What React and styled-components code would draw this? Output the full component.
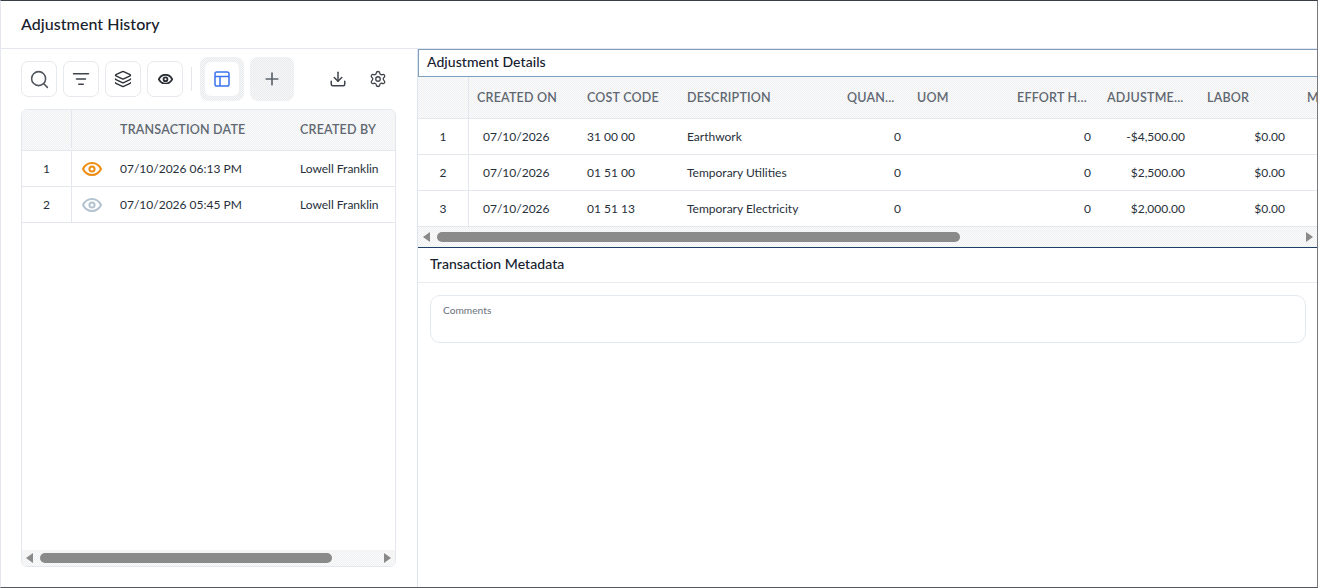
import styled, { createGlobalStyle, css } from 'styled-components'
import { Search, ListFilter, Layers, Plus, Download, Settings } from 'lucide-react'

const GlobalStyle = createGlobalStyle`
  html, body {
    margin: 0;
    height: 100%;
    background: #fff;
    font-family: Lato, "Liberation Sans", sans-serif;
    color: #1f2933;
  }
  * { box-sizing: border-box; }
`

const dither = css`
  background: repeating-conic-gradient(#eff0f2 0 25%, #fbfbfb 0 50%) 0 0 / 2px 2px;
`

const toolDither = css`
  background: repeating-conic-gradient(#e8eaec 0 25%, #f7f8f9 0 50%) 0 0 / 2px 2px;
`

const historyColumns = '50px 40px 180px 1fr'
const detailColumns = '51px 110px 100px 160px 70px 100px 90px 100px 100px 100px'

const detailRows = [
  { id: 1, date: '07/10/2026', code: '31 00 00', description: 'Earthwork', amount: '-$4,500.00' },
  { id: 2, date: '07/10/2026', code: '01 51 00', description: 'Temporary Utilities', amount: '$2,500.00' },
  { id: 3, date: '07/10/2026', code: '01 51 13', description: 'Temporary Electricity', amount: '$2,000.00' },
]

const historyRows = [
  { id: 1, date: '07/10/2026 06:13 PM', user: 'Lowell Franklin', color: '#ee8c12' },
  { id: 2, date: '07/10/2026 05:45 PM', user: 'Lowell Franklin', color: '#b3c3d1' },
]

const Frame = styled.div`
  width: 1318px;
  height: 588px;
  display: flex;
  flex-direction: column;
  overflow: hidden;
  border-top: 1px solid #3a3f47;
  border-right: 1px solid #77797d;
  border-bottom: 1px solid #55585c;
  border-left: 1px solid #e4e8ee;
`

const PageHeader = styled.header`
  height: 48px;
  flex: none;
  display: flex;
  align-items: center;
  padding: 0 20px 3px;
  border-bottom: 1px solid #e4e8ee;
  font-size: 16px;
  font-weight: 500;
  letter-spacing: 0.05px;
  color: #17202b;
`

const Body = styled.div`
  flex: 1;
  min-height: 0;
  display: flex;
`

const LeftPane = styled.section`
  width: 417px;
  flex: none;
  display: flex;
  flex-direction: column;
  padding: 8px 21px 20px 20px;
  border-right: 1px solid #dde6ee;
`

const RightPane = styled.section`
  flex: 1;
  min-width: 0;
  display: flex;
  flex-direction: column;
`

const Toolbar = styled.div`
  height: 44px;
  flex: none;
  display: flex;
  align-items: center;
  gap: 6px;
  margin-bottom: 8px;
`

const ToolButton = styled.button`
  width: 36px;
  height: 36px;
  padding: 0;
  display: flex;
  align-items: center;
  justify-content: center;
  background: #fff;
  border: 1px solid #e6e9ed;
  border-radius: 7px;
  color: ${(p) => p.$color || '#2b3036'};
`

const ToolDivider = styled.span`
  width: 1px;
  height: 24px;
  margin: 0 2px;
  background: #e4e7eb;
`

const ActiveWrap = styled.div`
  ${toolDither}
  width: 44px;
  height: 44px;
  display: flex;
  align-items: center;
  justify-content: center;
  border-radius: 8px;
`

const ActiveButton = styled(ToolButton)`
  border-color: #eef0f3;
`

const AddButton = styled.button`
  ${toolDither}
  width: 44px;
  height: 44px;
  padding: 0;
  display: flex;
  align-items: center;
  justify-content: center;
  border: none;
  border-radius: 8px;
  color: #5d646c;
`

const PlainIcon = styled.button`
  width: 24px;
  height: 24px;
  padding: 0;
  display: flex;
  align-items: center;
  justify-content: center;
  background: none;
  border: none;
  color: #3f454c;
  margin-left: ${(p) => p.$offset || 0}px;
`

const HistoryCard = styled.div`
  flex: 1;
  min-height: 0;
  display: flex;
  flex-direction: column;
  overflow: hidden;
  border: 1px solid #e4e8ee;
  border-radius: 6px;
`

const Spacer = styled.div`
  flex: 1;
`

const HeadRow = styled.div`
  ${dither}
  height: ${(p) => p.$height}px;
  flex: none;
  display: grid;
  grid-template-columns: ${(p) => p.$columns};
  padding-bottom: ${(p) => p.$lift || 0}px;
  border-bottom: 1px solid #e4e8ee;
`

const Row = styled.div`
  height: 36px;
  flex: none;
  display: grid;
  grid-template-columns: ${(p) => p.$columns};
  border-bottom: 1px solid #e4e8ee;
`

const HeadCell = styled.div`
  display: flex;
  align-items: center;
  padding: 0 8px;
  min-width: 0;
  overflow: hidden;
  white-space: nowrap;
  font-size: 12.5px;
  font-weight: 600;
  letter-spacing: 0.2px;
  color: #5f6872;
  border-right: ${(p) => (p.$divider ? '1px solid #e4e8ee' : 'none')};
`

const Cell = styled.div`
  display: flex;
  align-items: center;
  justify-content: ${(p) => (p.$align === 'right' ? 'flex-end' : p.$align === 'center' ? 'center' : 'flex-start')};
  padding: ${(p) => (p.$wide ? '0 14px' : '0 8px')};
  min-width: 0;
  overflow: hidden;
  white-space: nowrap;
  font-size: 12px;
  color: #27303a;
  border-right: ${(p) => (p.$divider ? '1px solid #e4e8ee' : 'none')};
`

const ScrollBar = styled.div`
  ${dither}
  height: ${(p) => p.$height}px;
  flex: none;
  display: flex;
  align-items: center;
  padding: 0 4px 0 ${(p) => p.$inset}px;
  gap: 7px;
`

const ScrollArrow = styled.span`
  width: 0;
  height: 0;
  flex: none;
  border-top: 5px solid transparent;
  border-bottom: 5px solid transparent;
  ${(p) => (p.$dir === 'left' ? 'border-right: 7px solid #8a8a8a;' : 'border-left: 7px solid #8a8a8a;')}
`

const ScrollTrack = styled.div`
  flex: 1;
  height: 10px;
`

const ScrollThumb = styled.div`
  height: 100%;
  background: #8a8a8a;
  border-radius: 5px;
`

const DetailTitle = styled.h2`
  height: 28px;
  flex: none;
  margin: 0;
  display: flex;
  align-items: center;
  padding: 0 8px 3px;
  border: 1px solid #7f9fbd;
  border-right: none;
  font-size: 14px;
  font-weight: 500;
  letter-spacing: 0.05px;
  color: #14202e;
`

const DetailTable = styled.div`
  flex: none;
  display: flex;
  flex-direction: column;
  overflow: hidden;
`

const MetaPanel = styled.div`
  flex: 1;
  border-top: 1px solid #1f3f66;
`

const MetaTitle = styled.h2`
  height: 35px;
  margin: 0;
  display: flex;
  align-items: center;
  padding: 0 12px 3px;
  border-bottom: 1px solid #e8ecf0;
  font-size: 14px;
  font-weight: 500;
  letter-spacing: 0.05px;
  color: #14202e;
`

const CommentsBox = styled.div`
  height: 48px;
  margin: 12px 11px 0 12px;
  padding: 8px 12px;
  border: 1px solid #e4e9f0;
  border-radius: 10px;
  font-size: 10.2px;
  color: #69727c;
`

const EyeIcon = ({ width, color = 'currentColor', strokeWidth = 2 }) => (
  <svg width={width} height={width * 0.7} viewBox="0 0 20 14" fill="none" stroke={color} strokeWidth={strokeWidth}>
    <path d="M1 7C3 3 6 1 10 1s7 2 9 6c-2 4-5 6-9 6s-7-2-9-6z" strokeLinejoin="round" />
    <circle cx="10" cy="7" r="2.6" />
  </svg>
)

const TableIcon = () => (
  <svg width="16" height="16" viewBox="0 0 16 16" fill="none" stroke="currentColor" strokeWidth="1.5">
    <rect x="1" y="1" width="14" height="14" rx="1.8" />
    <path d="M1 5.5h14M6 5.5V15" />
  </svg>
)

const Scroller = ({ height, thumb, inset }) => (
  <ScrollBar $height={height} $inset={inset}>
    <ScrollArrow $dir="left" />
    <ScrollTrack>
      <ScrollThumb style={{ width: thumb }} />
    </ScrollTrack>
    <ScrollArrow $dir="right" />
  </ScrollBar>
)

const App = () => {
  return (
    <Frame>
      <GlobalStyle />
      <PageHeader>Adjustment History</PageHeader>
      <Body>
        <LeftPane>
          <Toolbar>
            <ToolButton $color="#50565d"><Search size={21} strokeWidth={1.75} /></ToolButton>
            <ToolButton $color="#3f454c"><ListFilter size={18} strokeWidth={2} /></ToolButton>
            <ToolButton><Layers size={18} strokeWidth={1.75} /></ToolButton>
            <ToolButton><EyeIcon width={15} strokeWidth={2.4} /></ToolButton>
            <ToolDivider />
            <ActiveWrap>
              <ActiveButton $color="#3a74ee"><TableIcon /></ActiveButton>
            </ActiveWrap>
            <AddButton><Plus size={20} strokeWidth={2} /></AddButton>
            <PlainIcon $offset={26}><Download size={18} strokeWidth={2} /></PlainIcon>
            <PlainIcon $offset={10}><Settings size={18} strokeWidth={1.75} /></PlainIcon>
          </Toolbar>
          <HistoryCard>
            <HeadRow $height={41} $lift={2} $columns={historyColumns}>
              <HeadCell $divider />
              <HeadCell />
              <HeadCell>TRANSACTION DATE</HeadCell>
              <HeadCell>CREATED BY</HeadCell>
            </HeadRow>
            {historyRows.map((row) => (
              <Row key={row.id} $columns={historyColumns}>
                <Cell $align="center" $divider>{row.id}</Cell>
                <Cell $align="center"><EyeIcon width={20} color={row.color} /></Cell>
                <Cell>{row.date}</Cell>
                <Cell>{row.user}</Cell>
              </Row>
            ))}
            <Spacer />
            <Scroller height={16} thumb={292} inset={4} />
          </HistoryCard>
        </LeftPane>
        <RightPane>
          <DetailTitle>Adjustment Details</DetailTitle>
          <DetailTable>
            <HeadRow $height={42} $columns={detailColumns}>
              <HeadCell $divider />
              <HeadCell>CREATED ON</HeadCell>
              <HeadCell>COST CODE</HeadCell>
              <HeadCell>DESCRIPTION</HeadCell>
              <HeadCell>QUAN...</HeadCell>
              <HeadCell>UOM</HeadCell>
              <HeadCell>EFFORT H...</HeadCell>
              <HeadCell>ADJUSTME...</HeadCell>
              <HeadCell>LABOR</HeadCell>
              <HeadCell>M</HeadCell>
            </HeadRow>
            {detailRows.map((row) => (
              <Row key={row.id} $columns={detailColumns}>
                <Cell $align="center" $divider>{row.id}</Cell>
                <Cell $wide>{row.date}</Cell>
                <Cell>{row.code}</Cell>
                <Cell>{row.description}</Cell>
                <Cell $align="right">0</Cell>
                <Cell />
                <Cell $align="right">0</Cell>
                <Cell $align="right" $wide>{row.amount}</Cell>
                <Cell $align="right" $wide>$0.00</Cell>
                <Cell />
              </Row>
            ))}
            <Scroller height={20} thumb={523} inset={5} />
          </DetailTable>
          <MetaPanel>
            <MetaTitle>Transaction Metadata</MetaTitle>
            <CommentsBox>Comments</CommentsBox>
          </MetaPanel>
        </RightPane>
      </Body>
    </Frame>
  )
}

export default App
